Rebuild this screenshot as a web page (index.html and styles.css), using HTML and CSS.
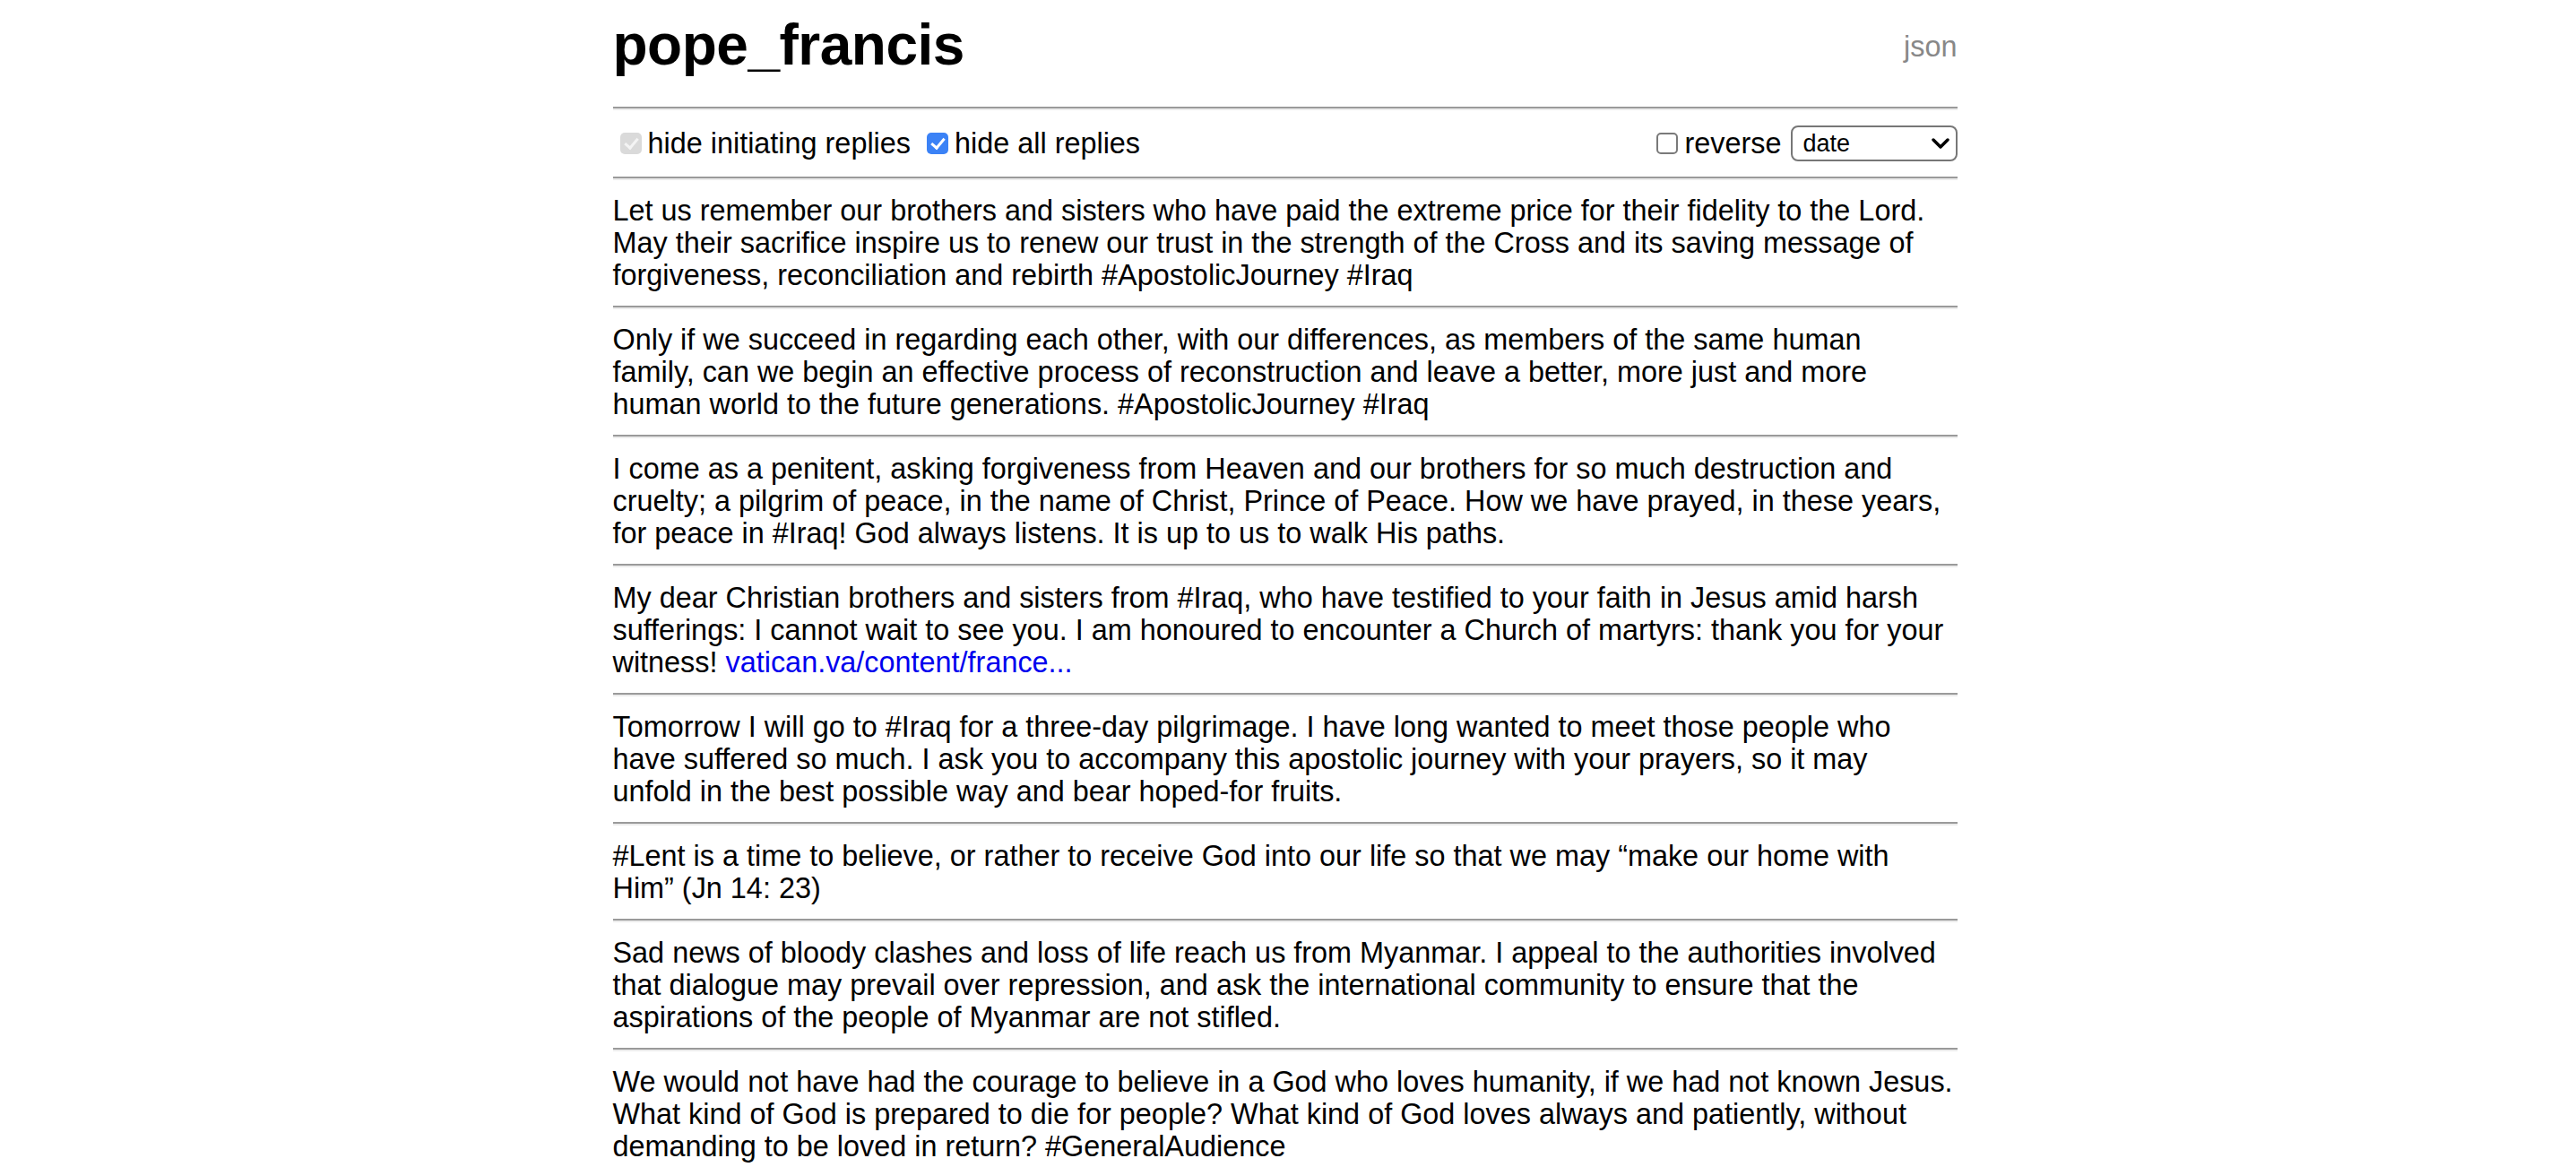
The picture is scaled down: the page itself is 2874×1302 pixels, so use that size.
FILE: index.html
```html
<!DOCTYPE html>
<html lang="en">
<head>
<meta charset="utf-8">
<title>pope_francis</title>
<link rel="stylesheet" href="styles.css">
</head>
<body>
<div class="page">
  <header class="header">
    <h1 class="title">pope_francis</h1>
    <a class="json" href="#">json</a>
  </header>
  <hr class="rule">
  <div class="controls">
    <div class="group">
      <label class="opt"><input type="checkbox" class="check" checked disabled><span>hide initiating replies</span></label>
      <label class="opt"><input type="checkbox" class="check" checked><span>hide all replies</span></label>
    </div>
    <div class="group">
      <label class="opt"><input type="checkbox" class="check"><span>reverse</span></label>
      <div class="select-wrap">
        <select class="sort"><option>date</option></select>
        <svg class="chevron" viewBox="0 0 20 12" width="20" height="12"><path d="M2 2 L10 10 L18 2" fill="none" stroke="#000" stroke-width="3.4" stroke-linecap="round" stroke-linejoin="round"/></svg>
      </div>
    </div>
  </div>
  <hr class="rule">
  <p class="tweet">Let us remember our brothers and sisters who have paid the extreme price for their fidelity to the Lord.<br>May their sacrifice inspire us to renew our trust in the strength of the Cross and its saving message of<br>forgiveness, reconciliation and rebirth #ApostolicJourney #Iraq</p>
  <hr class="rule">
  <p class="tweet">Only if we succeed in regarding each other, with our differences, as members of the same human<br>family, can we begin an effective process of reconstruction and leave a better, more just and more<br>human world to the future generations. #ApostolicJourney #Iraq</p>
  <hr class="rule">
  <p class="tweet">I come as a penitent, asking forgiveness from Heaven and our brothers for so much destruction and<br>cruelty; a pilgrim of peace, in the name of Christ, Prince of Peace. How we have prayed, in these years,<br>for peace in #Iraq! God always listens. It is up to us to walk His paths.</p>
  <hr class="rule">
  <p class="tweet">My dear Christian brothers and sisters from #Iraq, who have testified to your faith in Jesus amid harsh<br>sufferings: I cannot wait to see you. I am honoured to encounter a Church of martyrs: thank you for your<br>witness! <a class="link" href="#">vatican.va/content/france...</a></p>
  <hr class="rule">
  <p class="tweet">Tomorrow I will go to #Iraq for a three-day pilgrimage. I have long wanted to meet those people who<br>have suffered so much. I ask you to accompany this apostolic journey with your prayers, so it may<br>unfold in the best possible way and bear hoped-for fruits.</p>
  <hr class="rule">
  <p class="tweet">#Lent is a time to believe, or rather to receive God into our life so that we may “make our home with<br>Him” (Jn 14: 23)</p>
  <hr class="rule">
  <p class="tweet">Sad news of bloody clashes and loss of life reach us from Myanmar. I appeal to the authorities involved<br>that dialogue may prevail over repression, and ask the international community to ensure that the<br>aspirations of the people of Myanmar are not stifled.</p>
  <hr class="rule">
  <p class="tweet">We would not have had the courage to believe in a God who loves humanity, if we had not known Jesus.<br>What kind of God is prepared to die for people? What kind of God loves always and patiently, without<br>demanding to be loved in return? #GeneralAudience</p>
  <hr class="rule">
</div>
</body>
</html>
```

FILE: styles.css
```css
html, body {
  margin: 0;
  padding: 0;
  background: #fff;
}

body {
  padding-right: 7px;
  font-family: "Liberation Sans", Arial, Helvetica, sans-serif;
  font-size: 32.4px;
  line-height: 36px;
  color: #000;
}

.page {
  width: 1500px;
  margin: 0 auto;
}

.header {
  display: flex;
  justify-content: space-between;
  align-items: center;
  padding: 13px 0 16px;
}

.title {
  margin: 0;
  font-size: 64px;
  line-height: 74px;
  font-weight: bold;
  letter-spacing: -0.5px;
}

.json {
  margin-top: 4px;
  color: #888;
  text-decoration: none;
  font-size: 32.4px;
  line-height: 36px;
}

.rule {
  height: 0;
  margin: 16px 0;
  border: 0;
  border-top: 2px solid #9a9a9a;
  border-bottom: 2px solid #ececec;
}

.controls {
  display: flex;
  justify-content: space-between;
  align-items: center;
  height: 42px;
}

.group {
  display: flex;
  align-items: center;
}

.opt {
  display: flex;
  align-items: center;
  margin-right: 10px;
}

.check {
  appearance: none;
  -webkit-appearance: none;
  position: relative;
  box-sizing: border-box;
  width: 24px;
  height: 24px;
  margin: 0 7px 0 8px;
  border: 2px solid #7a7a7a;
  border-radius: 5px;
  background: #fff;
}

.check:checked {
  border: 0;
  background: #3b82f6;
}

.check:checked:disabled {
  background: #dadada;
}

.check:checked::after {
  content: "";
  position: absolute;
  left: 8px;
  top: 3px;
  width: 6px;
  height: 12px;
  border-right: 3.5px solid #fff;
  border-bottom: 3.5px solid #fff;
  transform: rotate(40deg);
}

.check:checked:disabled::after {
  border-color: #f4f4f4;
}

.select-wrap {
  position: relative;
  display: flex;
}

.sort {
  appearance: none;
  -webkit-appearance: none;
  width: 186px;
  height: 40px;
  margin: 0;
  padding: 0 0 0 12px;
  border: 2px solid #777;
  border-radius: 8px;
  background: #fff;
  color: #000;
  font-family: "Liberation Sans", Arial, sans-serif;
  font-size: 27px;
}

.chevron {
  position: absolute;
  right: 9px;
  top: 14px;
  pointer-events: none;
}

.tweet {
  margin: 0;
}

.link {
  color: #0000ee;
  text-decoration: none;
}
```
